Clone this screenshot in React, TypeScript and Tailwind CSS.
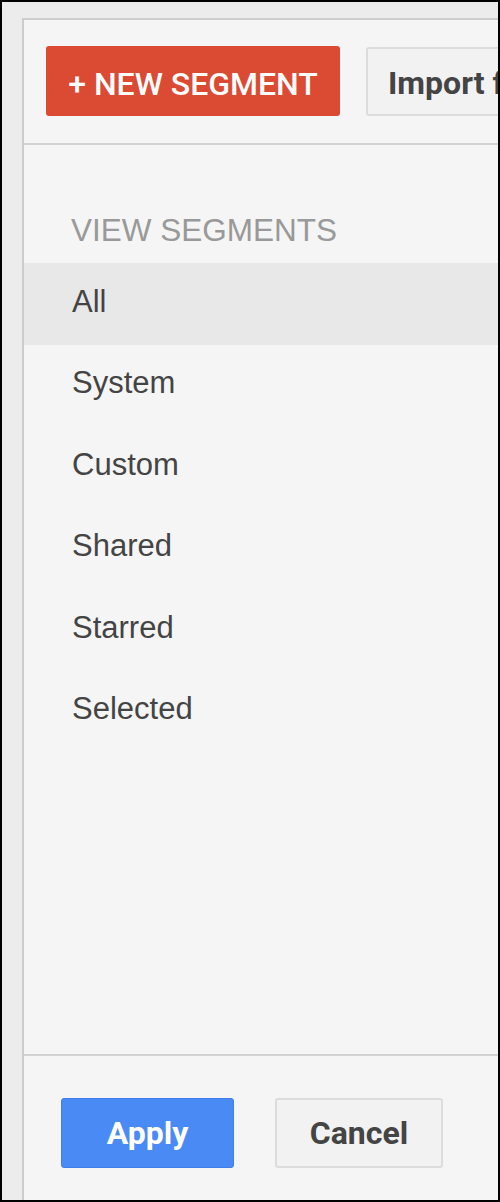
import React from 'react';

const segments = ['All', 'System', 'Custom', 'Shared', 'Starred', 'Selected'];

const sans = { fontFamily: '"Liberation Sans", Arial, sans-serif' };
const roboto = { fontFamily: 'Roboto, "Liberation Sans", sans-serif' };

export default function App() {
  return (
    <div className="w-[500px] h-[1202px] bg-black pt-[2px] pl-[2px] pr-[2px] pb-[2px] overflow-hidden">
      <div className="h-full bg-[#ececec] pl-[20px] pt-[16px] overflow-hidden">
        <div className="h-full flex flex-col bg-[#f5f5f5] border-l-2 border-t-2 border-[#cdcdcd] w-[700px]">
          {/* header buttons */}
          <div className="flex items-center gap-[26px] pl-[22px] pt-[26px] pb-[27px] border-b-2 border-[#d2d2d2] shrink-0">
            <button
              type="button"
              className="h-[70px] w-[294px] rounded-[3px] bg-[#db4a33] text-white text-[32px] font-medium flex items-center justify-center pt-[5px] whitespace-nowrap"
              style={roboto}
            >
              + NEW SEGMENT
            </button>
            <button
              type="button"
              className="h-[69px] w-[330px] rounded-[3px] bg-[#f2f2f2] border-2 border-[#dcdcdc] text-[#444] text-[32px] font-bold text-left pl-[20px] pt-[3px] whitespace-nowrap"
              style={roboto}
            >
              Import from gallery
            </button>
          </div>

          {/* list */}
          <div className="flex-1 flex flex-col" style={sans}>
            <div className="h-[118px] flex items-end pb-[9px] pl-[47px] text-[31.5px] text-[#999]">
              VIEW SEGMENTS
            </div>
            {segments.map((s, i) => (
              <div
                key={s}
                className={`h-[81.5px] flex items-center pl-[48px] pb-[4px] text-[31px] text-[#444] ${
                  i === 0 ? 'bg-[#e8e8e8]' : ''
                }`}
              >
                {s}
              </div>
            ))}
          </div>

          {/* footer */}
          <div className="h-[146px] shrink-0 border-t-2 border-[#d2d2d2] flex items-start gap-[41px] pl-[37px] pt-[42px]">
            <button
              type="button"
              className="h-[70px] w-[173px] rounded-[3px] bg-[#4a8af4] border border-[#3e7fe9] text-white text-[32px] font-bold"
              style={roboto}
            >
              Apply
            </button>
            <button
              type="button"
              className="h-[70px] w-[168px] rounded-[3px] bg-[#f2f2f2] border-2 border-[#dcdcdc] text-[#444] text-[32px] font-bold"
              style={roboto}
            >
              Cancel
            </button>
          </div>
        </div>
      </div>
    </div>
  );
}
